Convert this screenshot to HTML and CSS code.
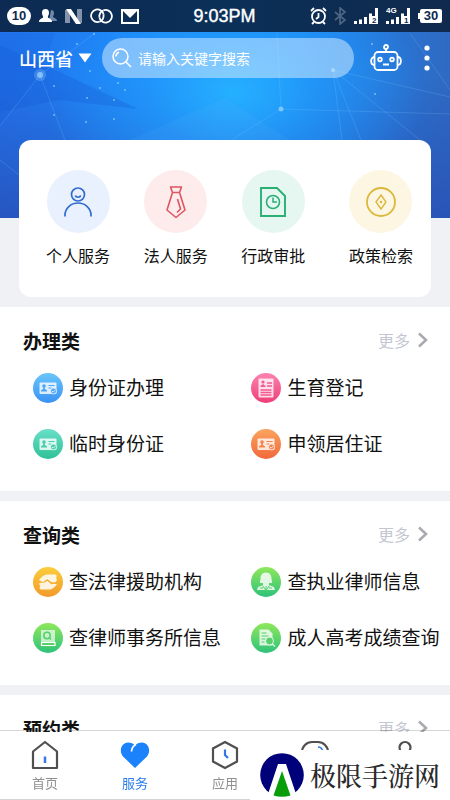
FILE: index.html
```html
<!DOCTYPE html>
<html lang="zh-CN">
<head>
<meta charset="utf-8">
<meta name="viewport" content="width=device-width, initial-scale=1">
<title>服务</title>
<link rel="stylesheet" href="styles.css">
</head>
<body>
<svg class="defs" aria-hidden="true">
  <defs>
    <symbol id="idcard" viewBox="0 0 30 30">
      <rect x="6.500" y="9.500" width="17" height="11.500" rx="1" fill="#fff" fill-opacity=".8"/>
      <circle cx="11" cy="13" r="1.800" fill="currentColor"/>
      <path d="M10.200 14h1.600v2l2.200 1.200v1.300H8v-1.300l2.200-1.200z" fill="currentColor"/>
      <path d="M15.500 12.500h6M15.500 15h3" stroke="currentColor" stroke-width="1"/>
      <circle cx="20.500" cy="18" r="3" fill="currentColor" stroke="#fff" stroke-opacity=".7"/>
      <path d="M19 18l1.200 1.200 2-2.200" fill="none" stroke="#fff" stroke-opacity=".8"/>
    </symbol>
    <symbol id="chevron" viewBox="0 0 12 16">
      <path d="M2 1.500L9 8l-7 6.500" fill="none" stroke="currentColor" stroke-width="2.600"/>
    </symbol>
    <symbol id="signal" viewBox="0 0 25 18">
      <path d="M0 14h3v3H0zM5 12.500h3V17H5zM10 10h3v7h-3zM15 6.500h3V17h-3zM21 1h3v16h-3z" fill="#fff"/>
      <path d="M16 9h7v8h-7z" fill="#fff"/>
    </symbol>
  </defs>
</svg>

<header class="hero">
  <svg class="hero-art" viewBox="0 0 450 218" preserveAspectRatio="none" aria-hidden="true">
    <path d="M66 75L138 109 60 100 0 112V45z" fill="#1456cf" fill-opacity=".28"/>
    <path d="M0 33h55L40 75 0 125z" fill="#1660d8" fill-opacity=".2"/>
    <path d="M130 140L225 98 290 140z" fill="#7cc4ff" fill-opacity=".08"/>
    <path d="M40 75L0 126M40 75L95 33M40 75L65 140M0 160l19 15M281 109L225 144M281 109L450 114M281 109L277 33M333 70L450 97M333 70L342 140M333 70L420 140M333 70L361 140M410 33L450 90" fill="none" stroke="#8ecbff" stroke-opacity=".2"/>
    <g fill="#a5dcff" fill-opacity=".65">
      <circle cx="40" cy="75" r="6" fill-opacity=".25"/><circle cx="40" cy="75" r="3"/>
      <circle cx="281" cy="109" r="2.500"/><circle cx="333" cy="70" r="2"/>
      <circle cx="94" cy="34" r="1"/><circle cx="77" cy="44" r="1"/><circle cx="54" cy="86" r="1"/>
      <circle cx="87" cy="98" r="1"/><circle cx="100" cy="88" r="1"/><circle cx="114" cy="100" r="1"/>
      <circle cx="54" cy="115" r="1"/><circle cx="86" cy="122" r="1"/><circle cx="125" cy="90" r="1"/>
      <circle cx="118" cy="83" r="1"/><circle cx="372" cy="44" r="1"/><circle cx="375" cy="94" r="1"/>
      <circle cx="90" cy="71" r="1"/><circle cx="114" cy="119" r="1"/>
    </g>
  </svg>

  <div class="status">
    <div class="status-group">
      <span class="count">10</span>
      <svg width="18" height="16" viewBox="0 0 18 16"><path d="M12 2c2 0 3 1 3 3s-.8 2.500-1 3.500c0 1.500 4 1.500 4 4.500h-8z" fill="#7189a8"/><path d="M6.500 1C9 1 10 2.600 10 5c0 2-1 2.600-1.200 4 .3 1.500 4.200 1.600 4.200 5H0c0-3.400 4-3.500 4.200-5C4 7.600 3 7 3 5c0-2.400 1-4 3.500-4z" fill="#fff"/></svg>
      <svg width="17" height="17" viewBox="0 0 17 17"><path d="M0 2h5v13H0zM12 1h5v14h-5z" fill="#8293aa"/><path d="M1 1h5l10 15h-5z" fill="#fff"/></svg>
      <svg width="23" height="16" viewBox="0 0 23 16" fill="none" stroke="#fff" stroke-width="1.800"><path d="M9.500 13.700A6.300 6.300 0 1 1 13.600 6.600M13.500 2.300A6.300 6.300 0 1 1 9.400 9.400"/><path d="M9.400 9.400C9 6 11 3 13.500 2.300M13.600 6.600C14 10 12 13 9.500 13.700"/></svg>
      <svg width="18" height="15" viewBox="0 0 18 15"><rect x="1" y="1" width="16" height="13" fill="none" stroke="#fff" stroke-width="2"/><path d="M1 1h16L9 9z" fill="#fff"/></svg>
    </div>
    <time class="clock">9:03PM</time>
    <div class="status-group status-right">
      <svg width="17" height="18" viewBox="0 0 17 18" fill="none" stroke="#fff" stroke-width="1.800"><circle cx="8.500" cy="9.500" r="6.500"/><path d="M8.500 6v4L6 12M1 4l3-3M16 4l-3-3M4 15l-2 2M13 15l2 2"/></svg>
      <svg width="13" height="18" viewBox="0 0 13 18" fill="none" stroke="#4c6583" stroke-width="1.700"><path d="M1 5l10 8-5 4V1l5 4-10 8"/></svg>
      <svg width="25" height="18" viewBox="0 0 25 18"><use href="#signal"/><text x="18" y="16" class="sim">2</text></svg>
      <svg width="25" height="18" viewBox="0 0 25 18"><use href="#signal"/><text x="18" y="16" class="sim">1</text><text x="0" y="6" class="net">4G</text></svg>
      <span class="battery">30</span>
    </div>
  </div>

  <div class="topbar">
    <label class="region">
      <select aria-label="地区"><option>山西省</option></select>
      <svg width="14" height="10" viewBox="0 0 14 10"><path d="M.5.500h13L7 9.500z" fill="#fff"/></svg>
    </label>
    <label class="search">
      <svg width="20" height="20" viewBox="0 0 20 20" fill="none" stroke="#fff" stroke-width="1.500"><circle cx="8.500" cy="8.500" r="7.500"/><path d="M14 14l5 5M4 8.500A4.500 4.500 0 0 1 7 4.300"/></svg>
      <input type="search" placeholder="请输入关键字搜索" aria-label="搜索">
    </label>
    <button class="plain" aria-label="智能助手">
      <svg width="32" height="30" viewBox="0 0 32 30" fill="none" stroke="#fff" stroke-width="1.800"><rect x="4.500" y="9" width="23" height="18" rx="3.500"/><circle cx="16" cy="4" r="2"/><path d="M16 6v3M4.500 14c-4.500 0-4.500 8 0 8M27.500 14c4.500 0 4.500 8 0 8M13 21.500h6"/><circle cx="10" cy="16.500" r="1.800"/><circle cx="22" cy="16.500" r="1.800"/></svg>
    </button>
    <button class="plain" aria-label="菜单">
      <svg width="6" height="26" viewBox="0 0 6 26" fill="#fff"><circle cx="3" cy="3" r="2.600"/><circle cx="3" cy="13" r="2.600"/><circle cx="3" cy="23" r="2.600"/></svg>
    </button>
  </div>
</header>

<main>
  <nav class="services">
    <a class="service" href="#"><span class="disc blue">
      <svg width="30" height="30" viewBox="0 0 30 30" fill="none" stroke="#326bd0" stroke-width="1.700"><circle cx="15" cy="7.500" r="6.500"/><path d="M12.300 8.500c.6 2.300 4.800 2.300 5.400 0M2 29.500v-1.500a13 12 0 0 1 26 0v1.500"/></svg></span>个人服务</a>
    <a class="service" href="#"><span class="disc red">
      <svg width="20" height="34" viewBox="0 0 20 34" fill="none" stroke="#dc5662" stroke-width="1.600" stroke-linejoin="round"><path d="M4.500 2h11L13.500 7.500h-7zM6.500 7.500L1 25l9 7.500 9-7.500-5.500-17.500M11.500 14l3 10-3.500 3.500"/></svg></span>法人服务</a>
    <a class="service" href="#"><span class="disc green">
      <svg width="26" height="30" viewBox="0 0 26 30" fill="none" stroke="#2ab073" stroke-width="1.900"><path d="M1 1h16l8 8v20H1z"/><circle cx="13" cy="15" r="6.500" stroke-width="1.600"/><path d="M13 10.500V15h4" stroke-width="1.500"/></svg></span>行政审批</a>
    <a class="service" href="#"><span class="disc gold">
      <svg width="30" height="30" viewBox="0 0 30 30" fill="none" stroke="#dcb83a" stroke-width="1.800"><circle cx="15" cy="15" r="14"/><path d="M15 8l5 7-5 7-5-7z" stroke-width="1.400"/><circle cx="15" cy="15" r="1.300" fill="#dcb83a" stroke="none"/></svg></span>政策检索</a>
  </nav>

  <section class="panel">
    <div class="panel-head"><h2>办理类</h2><a class="more" href="#">更多<svg width="12" height="16"><use href="#chevron"/></svg></a></div>
    <div class="items">
      <a class="item" href="#"><svg class="badge sky"><use href="#idcard"/></svg>身份证办理</a>
      <a class="item" href="#"><svg class="badge pink" viewBox="0 0 30 30"><rect x="7.500" y="5.500" width="15" height="19" rx="1" fill="#fff" fill-opacity=".8"/><path d="M16 10h5M16 13h5M9.500 17h11M9.500 19.500h11M9.500 22h11" stroke="currentColor" stroke-width="1.300"/><circle cx="12" cy="9" r="1.600" fill="currentColor"/><path d="M9.500 14v-1l2.500-2 2.500 2v1z" fill="currentColor"/></svg>生育登记</a>
      <a class="item" href="#"><svg class="badge mint"><use href="#idcard"/></svg>临时身份证</a>
      <a class="item" href="#"><svg class="badge orange"><use href="#idcard"/></svg>申领居住证</a>
    </div>
  </section>

  <section class="panel">
    <div class="panel-head"><h2>查询类</h2><a class="more" href="#">更多<svg width="12" height="16"><use href="#chevron"/></svg></a></div>
    <div class="items">
      <a class="item" href="#"><svg class="badge amber" viewBox="0 0 30 30"><path d="M6 13c2-3 5-5.500 8-5.500h8c2 0 2 2.500 1 3.500l1 2-2 3-4-1-4-2.500-4 2.500z" fill="#fff" fill-opacity=".85"/><path d="M24 17c-2 3.500-5 5.500-8 5.500H8.500C6.500 22.500 6 20 7.500 19L6 17l2-2.500h3l3-1 4 3 4 .5z" fill="#fff" fill-opacity=".85"/><path d="M6.500 15.500l5-.5 3-2 4 3.500 5-1" fill="none" stroke="currentColor" stroke-width="1.200"/></svg>查法律援助机构</a>
      <a class="item" href="#"><svg class="badge lime" viewBox="0 0 30 30"><path d="M15 5.500c4 0 5.500 3 5.500 6 0 2 1 3 .5 4.500h-3v2l5 2 1 3H6l1-3 5-2v-2H9c-.5-1.500.5-2.500.5-4.500 0-3 1.500-6 5.500-6z" fill="#fff" fill-opacity=".82"/><path d="M11.500 18.500l3.500 5 3.500-5M15 19v4M9 21h3M18 21h3" fill="none" stroke="currentColor" stroke-width="1"/></svg>查执业律师信息</a>
      <a class="item" href="#"><svg class="badge lime" viewBox="0 0 30 30"><path d="M8 7h14v16H8z" fill="#fff" fill-opacity=".65"/><path d="M8 19h14v4.500H8z" fill="currentColor"/><path d="M22 19.500H8.500v3H22z" fill="none" stroke="#fff" stroke-width="1.200"/><circle cx="14" cy="12.500" r="3.200" fill="none" stroke="currentColor" stroke-width="1.500"/><path d="M16 14.500l2 2" stroke="currentColor" stroke-width="1.500"/></svg>查律师事务所信息</a>
      <a class="item" href="#"><svg class="badge lime" viewBox="0 0 30 30"><path d="M8.500 6.500h9l4 4v12h-13z" fill="#fff" fill-opacity=".78"/><path d="M10.500 10h5M10.500 13h7M10.500 16h4M10.500 19h3" stroke="currentColor" stroke-width="1"/><circle cx="18.500" cy="18" r="4" fill="currentColor" stroke="#fff" stroke-opacity=".8"/><path d="M21.500 21l2.500 2.500" stroke="#fff" stroke-opacity=".8" stroke-width="1.300"/></svg>成人高考成绩查询</a>
    </div>
  </section>

  <section class="panel">
    <div class="panel-head"><h2>预约类</h2><a class="more" href="#">更多<svg width="12" height="16"><use href="#chevron"/></svg></a></div>
  </section>
</main>

<nav class="tabs">
  <a class="tab" href="#"><svg viewBox="0 0 30 30"><path d="M3 11.500L15 2l12 9.500V28H3z" fill="none" stroke="#505050" stroke-width="2.200" stroke-linejoin="round"/><path d="M15 16.500v6.500" stroke="#3377e8" stroke-width="2.500"/></svg>首页</a>
  <a class="tab active" href="#"><svg viewBox="0 0 30 30"><path d="M15 28L3 16.500C-1.500 11 1.500 2.500 8 2.500c3 0 5.500 1 7 3 1.500-2 4-3 7-3 6.500 0 9.500 8.500 5 14z" fill="#1c82fb"/><path d="M16 4.500c-3 1.500-4.300 4-4.500 7" fill="none" stroke="#fff" stroke-width="1.800"/></svg>服务</a>
  <a class="tab" href="#"><svg viewBox="0 0 30 30"><path d="M15 2l12 6.500v13L15 28 3 21.500v-13z" fill="none" stroke="#505050" stroke-width="2.200"/><path d="M15 9.500V15l3 3" fill="none" stroke="#3377e8" stroke-width="2.200"/></svg>应用</a>
  <a class="tab" href="#" aria-label="消息"><svg viewBox="0 0 30 30"><path d="M12 2h6a10 10 0 0 1 10 10v4a10 10 0 0 1-10 10H2V12A10 10 0 0 1 12 2z" fill="none" stroke="#505050" stroke-width="2.200"/><path d="M18 7c3 0 4.500 2 5 5" fill="none" stroke="#3377e8" stroke-width="1.600"/></svg></a>
  <a class="tab" href="#" aria-label="我的"><svg viewBox="0 0 30 30"><circle cx="15" cy="7.500" r="5.500" fill="none" stroke="#505050" stroke-width="2.200"/><path d="M3 28c1-18 23-18 24 0" fill="none" stroke="#505050" stroke-width="2"/></svg></a>
</nav>

<aside class="brand">
  <svg width="44" height="44" viewBox="0 0 44 44"><circle cx="22" cy="22" r="21.800" fill="#00007a"/><path d="M18 11h8l11 33H7z" fill="#fff"/><path d="M22 18l8.500 24.500Q22 45 13.500 42.500z" fill="#0a9d0a"/></svg>
  <span>极限手游网</span>
</aside>
</body>
</html>
```

FILE: styles.css
```css
* {
  box-sizing: border-box;
}

body {
  margin: 0;
  min-height: 100vh;
  background: #f0f1f5;
  color: #111;
  font-family: "Noto Sans CJK SC", "Noto Sans", sans-serif;
  font-size: 16px;
}

a {
  color: inherit;
  text-decoration: none;
}

svg {
  display: block;
  flex: none;
}

.defs {
  position: absolute;
  width: 0;
  height: 0;
}

.hero {
  position: relative;
  height: 218px;
  background: linear-gradient(90deg, #2273ec 0%, #1d86f8 35%, #1d86f4 65%, #2f6ac2 100%);
}

.hero::before {
  content: "";
  position: absolute;
  inset: 0;
  background:
    radial-gradient(ellipse 190px 130px at 52% 42%, #25b0ff 0%, rgba(34, 160, 255, 0.6) 45%, rgba(34, 150, 255, 0) 100%),
    linear-gradient(180deg, rgba(36, 80, 190, 0) 35%, rgba(40, 78, 180, 0.8) 100%);
}

.hero-art {
  position: absolute;
  inset: 0;
  width: 100%;
  height: 100%;
}

.status {
  position: relative;
  display: grid;
  grid-template-columns: 1fr auto 1fr;
  align-items: center;
  height: 32px;
  padding: 0 8px 0 7px;
  background: linear-gradient(90deg, #0d2a52, #0b3058 50%, #10294d);
  color: #fff;
  font-family: "Liberation Sans", sans-serif;
}

.status-group {
  display: flex;
  align-items: center;
  gap: 8px;
}

.status-right {
  justify-content: flex-end;
  gap: 7px;
}

.count {
  width: 24px;
  border-radius: 9px;
  background: #fff;
  color: #0d2a52;
  font-size: 13px;
  font-weight: 700;
  line-height: 18px;
  text-align: center;
}

.clock {
  font-family: "Liberation Sans", sans-serif;
  font-size: 18px;
  -webkit-text-stroke: 0.4px #fff;
}

.battery {
  position: relative;
  width: 22px;
  margin-left: 2px;
  border-radius: 2px;
  background: #fff;
  color: #0d2a52;
  font-size: 13px;
  font-weight: 700;
  line-height: 14px;
  text-align: center;
}

.battery::before {
  content: "";
  position: absolute;
  top: 4px;
  left: -2px;
  width: 2px;
  height: 6px;
  background: #fff;
}

.sim {
  font: 700 8px "Liberation Sans", sans-serif;
  fill: #0d2a52;
}

.net {
  font: 700 8px "Liberation Sans", sans-serif;
  fill: #fff;
}

.topbar {
  position: relative;
  display: flex;
  align-items: center;
  padding: 6px 20px 0 19px;
}

.region {
  display: flex;
  align-items: center;
  gap: 5px;
  margin-right: 10px;
}

.region select {
  appearance: none;
  padding: 0;
  border: 0;
  background: none;
  color: #fff;
  font: 500 18px "Noto Sans CJK SC", sans-serif;
}

.search {
  display: flex;
  flex: 1;
  align-items: center;
  gap: 6px;
  height: 40px;
  margin-right: 16px;
  padding: 0 10px;
  border-radius: 20px;
  background: rgba(214, 235, 255, 0.52);
}

.search input {
  flex: 1;
  min-width: 0;
  padding: 0;
  border: 0;
  outline: 0;
  background: none;
  color: #fff;
  font: 14px "Noto Sans CJK SC", sans-serif;
}

.search input::placeholder {
  color: #fff;
}

.plain {
  padding: 0;
  border: 0;
  background: none;
}

.plain + .plain {
  margin-left: 22px;
}

.services {
  position: relative;
  display: flex;
  justify-content: space-between;
  margin: -78px 19px 10px;
  padding: 30px 18px 30px 27px;
  border-radius: 12px;
  background: #fff;
}

.service {
  display: flex;
  flex-direction: column;
  align-items: center;
  gap: 10px;
  line-height: 24px;
}

.service:last-child {
  margin-left: 10px;
}

.disc {
  display: grid;
  place-items: center;
  width: 63px;
  height: 63px;
  border-radius: 50%;
}

.blue { background: #e8f1fd; }
.red { background: #fdeceb; }
.green { background: #e5f7f0; }
.gold { background: #fdf6e3; }

.panel {
  margin-bottom: 10px;
  padding: 14px 0 20px;
  background: #fff;
}

.panel-head {
  display: flex;
  align-items: center;
  justify-content: space-between;
  height: 38px;
  padding: 0 21px 0 23px;
}

.panel h2 {
  margin: 0;
  font-size: 19px;
  font-weight: 700;
}

.more {
  display: flex;
  align-items: center;
  gap: 7px;
  color: #c3c7d2;
}

.more svg {
  color: #a9abb0;
}

.items {
  display: grid;
  grid-template-columns: 11fr 10fr;
  padding-left: 33px;
}

.item {
  display: flex;
  align-items: center;
  gap: 6px;
  height: 56px;
  padding-bottom: 2px;
  font-size: 19px;
  white-space: nowrap;
}

.badge {
  width: 30px;
  height: 30px;
  margin-top: 4px;
  border-radius: 50%;
}

.sky { background: linear-gradient(#69c5fb, #3a92f5); color: #4ba6f7; }
.pink { background: linear-gradient(#fc83b0, #ee3f78); color: #f4588f; }
.mint { background: linear-gradient(#69dfc8, #2fc197); color: #48cdad; }
.orange { background: linear-gradient(#fba45f, #f0693a); color: #f3834c; }
.amber { background: linear-gradient(#fbce3c, #f29a2a); color: #f6b033; }
.lime { background: linear-gradient(#8fe85a, #2ec27b); color: #55d06c; }

.tabs {
  position: fixed;
  inset: auto 0 0;
  display: grid;
  grid-template-columns: repeat(5, 1fr);
  height: 70px;
  padding-top: 9px;
  border-top: 1px solid rgba(0, 0, 0, 0.16);
  border-bottom: 1px solid #d5d5d5;
  background: linear-gradient(transparent 1px, #fff 1px) padding-box;
}

.tab {
  display: flex;
  flex-direction: column;
  align-items: center;
  color: #909090;
  font-size: 13px;
  line-height: 26px;
}

.tab svg {
  width: 30px;
  height: 30px;
}

.active {
  color: #2a7de8;
}

.brand {
  position: fixed;
  right: 0;
  bottom: 0;
  display: flex;
  align-items: center;
  gap: 6px;
  width: 200px;
  height: 50px;
  padding-left: 10px;
  background: #fff;
  color: #2b2b2b;
  font-family: "Noto Serif CJK SC", "Noto Sans CJK SC", serif;
  font-size: 26px;
  font-weight: 500;
  line-height: 44px;
  white-space: nowrap;
}
```
